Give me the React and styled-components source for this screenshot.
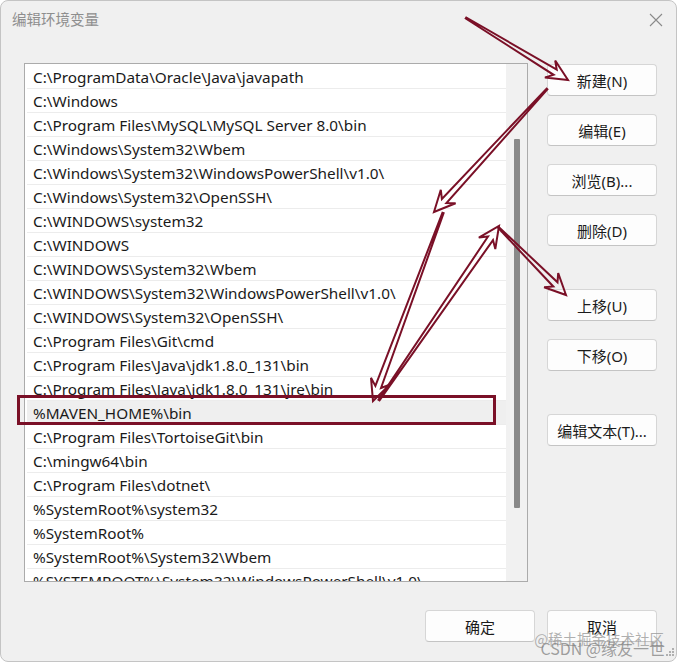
import React from "react";
import styled, { createGlobalStyle } from "styled-components";

const Global = createGlobalStyle`
  html, body { margin: 0; padding: 0; background: #ffffff; }
  body { font-family: "Noto Sans", "Noto Sans CJK SC", sans-serif; }
  * { box-sizing: border-box; }
`;

const Page = styled.div`
  position: relative;
  width: 677px;
  height: 664px;
  overflow: hidden;
`;

const Window = styled.div`
  position: relative;
  width: 677px;
  height: 662px;
  background: #f0f0f0;
  border: 1px solid #c4c4c4;
  border-radius: 8px;
  display: flex;
  flex-direction: column;
`;

const TitleBar = styled.div`
  height: 34px;
  display: flex;
  align-items: center;
  justify-content: space-between;
  padding: 0 12px 0 11px;
`;

const Title = styled.div`
  font-family: "Noto Sans CJK SC", sans-serif;
  font-size: 14.5px;
  color: #8e8e8e;
`;

const Close = styled.div`
  width: 16px;
  height: 16px;
  margin-top: 4px;
  display: flex;
  align-items: center;
  justify-content: center;
`;

const Body = styled.div`
  display: flex;
  gap: 19px;
  padding: 28px 0 0 23px;
`;

const ListBox = styled.div`
  width: 504px;
  height: 519px;
  background: #ffffff;
  border: 1px solid #ababab;
  display: flex;
  overflow: hidden;
`;

const Rows = styled.div`
  flex: 1;
  min-width: 0;
  padding: 1px 0 0 2px;
  overflow: hidden;
`;

const Row = styled.div`
  height: 24px;
  display: flex;
  align-items: center;
  border-bottom: 1px solid #ececec;
  background: ${(p) => (p.$selected ? "#efefef" : "#ffffff")};
`;

const RowText = styled.span`
  display: block;
  margin-left: 6px;
  font-family: "Noto Sans", "Noto Sans CJK SC", sans-serif;
  font-size: 15.3px;
  color: #1a1a1a;
  white-space: nowrap;
`;

const ScrollTrack = styled.div`
  width: 21px;
  flex: none;
  background: #f1f1f1;
  display: flex;
  justify-content: center;
  padding-top: 75px;
`;

const Thumb = styled.div`
  width: 6px;
  height: 369px;
  background: #898989;
  border-radius: 1px;
  margin-left: 1px;
`;

const ButtonCol = styled.div`
  display: flex;
  flex-direction: column;
  padding-top: 1px;
`;

const Btn = styled.div`
  width: 110px;
  height: 32px;
  margin-top: ${(p) => p.$gap ?? 18}px;
  background: #fdfdfd;
  border: 1px solid #d6d6d6;
  border-bottom-color: #c4c4c4;
  border-radius: 4px;
  display: flex;
  align-items: center;
  justify-content: center;
  font-family: "Noto Sans", "Noto Sans CJK SC", sans-serif;
  font-size: 15px;
  color: #1b1b1b;
`;

const Footer = styled.div`
  display: flex;
  justify-content: flex-end;
  gap: 12px;
  padding: 28px 19px 0 0;
`;

const Overlay = styled.svg`
  position: absolute;
  left: 0;
  top: 0;
  pointer-events: none;
`;

const Watermark = styled.div`
  position: absolute;
  right: 12px;
  bottom: 8px;
  display: flex;
  flex-direction: column;
  align-items: flex-end;
  pointer-events: none;
  font-family: "Noto Sans CJK SC", sans-serif;
  line-height: 1;
`;

const WmTop = styled.div`
  font-size: 14.5px;
  color: rgba(150, 150, 150, 0.75);
  margin-bottom: -6px;
  margin-right: 1px;
`;

const WmBottom = styled.div`
  font-size: 16px;
  color: rgba(120, 120, 120, 0.7);
`;

const Grip = styled.svg`
  position: absolute;
  right: 3px;
  bottom: 6px;
`;

const paths = [
  "C:\\ProgramData\\Oracle\\Java\\javapath",
  "C:\\Windows",
  "C:\\Program Files\\MySQL\\MySQL Server 8.0\\bin",
  "C:\\Windows\\System32\\Wbem",
  "C:\\Windows\\System32\\WindowsPowerShell\\v1.0\\",
  "C:\\Windows\\System32\\OpenSSH\\",
  "C:\\WINDOWS\\system32",
  "C:\\WINDOWS",
  "C:\\WINDOWS\\System32\\Wbem",
  "C:\\WINDOWS\\System32\\WindowsPowerShell\\v1.0\\",
  "C:\\WINDOWS\\System32\\OpenSSH\\",
  "C:\\Program Files\\Git\\cmd",
  "C:\\Program Files\\Java\\jdk1.8.0_131\\bin",
  "C:\\Program Files\\Java\\jdk1.8.0_131\\jre\\bin",
  "%MAVEN_HOME%\\bin",
  "C:\\Program Files\\TortoiseGit\\bin",
  "C:\\mingw64\\bin",
  "C:\\Program Files\\dotnet\\",
  "%SystemRoot%\\system32",
  "%SystemRoot%",
  "%SystemRoot%\\System32\\Wbem",
  "%SYSTEMROOT%\\System32\\WindowsPowerShell\\v1.0\\",
];

const buttons = [
  { label: "新建(N)", gap: 0 },
  { label: "编辑(E)" },
  { label: "浏览(B)..." },
  { label: "删除(D)" },
  { label: "上移(U)", gap: 43 },
  { label: "下移(O)" },
  { label: "编辑文本(T)...", gap: 43 },
];

function arrowPoints(x0, y0, x1, y1, h = 21, w = 10, s = 3) {
  const dx = x1 - x0;
  const dy = y1 - y0;
  const L = Math.hypot(dx, dy);
  const ux = dx / L;
  const uy = dy / L;
  const nx = -uy;
  const ny = ux;
  const p = (a, b) => `${a.toFixed(1)},${b.toFixed(1)}`;
  const jx = x1 - ux * (h - 6);
  const jy = y1 - uy * (h - 6);
  const bx = x1 - ux * h;
  const by = y1 - uy * h;
  return [
    p(x0 + nx * 0.6, y0 + ny * 0.6),
    p(jx + nx * s, jy + ny * s),
    p(bx + nx * w, by + ny * w),
    p(x1, y1),
    p(bx - nx * w, by - ny * w),
    p(jx - nx * s, jy - ny * s),
    p(x0 - nx * 0.6, y0 - ny * 0.6),
  ].join(" ");
}

const arrows = [
  [466, 18, 568, 80],
  [547, 89, 434, 212],
  [443, 213, 373, 401],
  [379, 400, 499, 226],
  [499, 228, 566, 295],
];

const RED = "#7a1027";

export default function App() {
  return (
    <Page>
      <Global />
      <Window>
        <TitleBar>
          <Title>编辑环境变量</Title>
          <Close>
            <svg width="14" height="14" viewBox="0 0 14 14">
              <path d="M1 1 L13 13 M13 1 L1 13" stroke="#8a8a8a" strokeWidth="1.1" fill="none" />
            </svg>
          </Close>
        </TitleBar>
        <Body>
          <ListBox>
            <Rows>
              {paths.map((t, i) => (
                <Row key={i} $selected={i === 14}>
                  <RowText>{t}</RowText>
                </Row>
              ))}
            </Rows>
            <ScrollTrack>
              <Thumb />
            </ScrollTrack>
          </ListBox>
          <ButtonCol>
            {buttons.map((b) => (
              <Btn key={b.label} $gap={b.gap}>
                {b.label}
              </Btn>
            ))}
          </ButtonCol>
        </Body>
        <Footer>
          <Btn $gap={0}>确定</Btn>
          <Btn $gap={0}>取消</Btn>
        </Footer>
      </Window>
      <Overlay width="677" height="664" viewBox="0 0 677 664">
        <rect x="18.5" y="396.5" width="476" height="27" fill="none" stroke={RED} strokeWidth="3" />
        {arrows.map((a, i) => (
          <polygon
            key={i}
            points={arrowPoints(...a)}
            fill="none"
            stroke={RED}
            strokeWidth="2"
            strokeLinejoin="miter"
          />
        ))}
      </Overlay>
      <Watermark>
        <WmTop>@稀土掘金技术社区</WmTop>
        <WmBottom>CSDN @缘友一世</WmBottom>
      </Watermark>
      <Grip width="10" height="10" viewBox="0 0 10 10">
        {[[8, 0], [5, 3], [8, 3], [2, 6], [5, 6], [8, 6]].map(([x, y], i) => (
          <rect key={i} x={x} y={y} width="2" height="2" fill="#b0b0b0" />
        ))}
      </Grip>
    </Page>
  );
}
